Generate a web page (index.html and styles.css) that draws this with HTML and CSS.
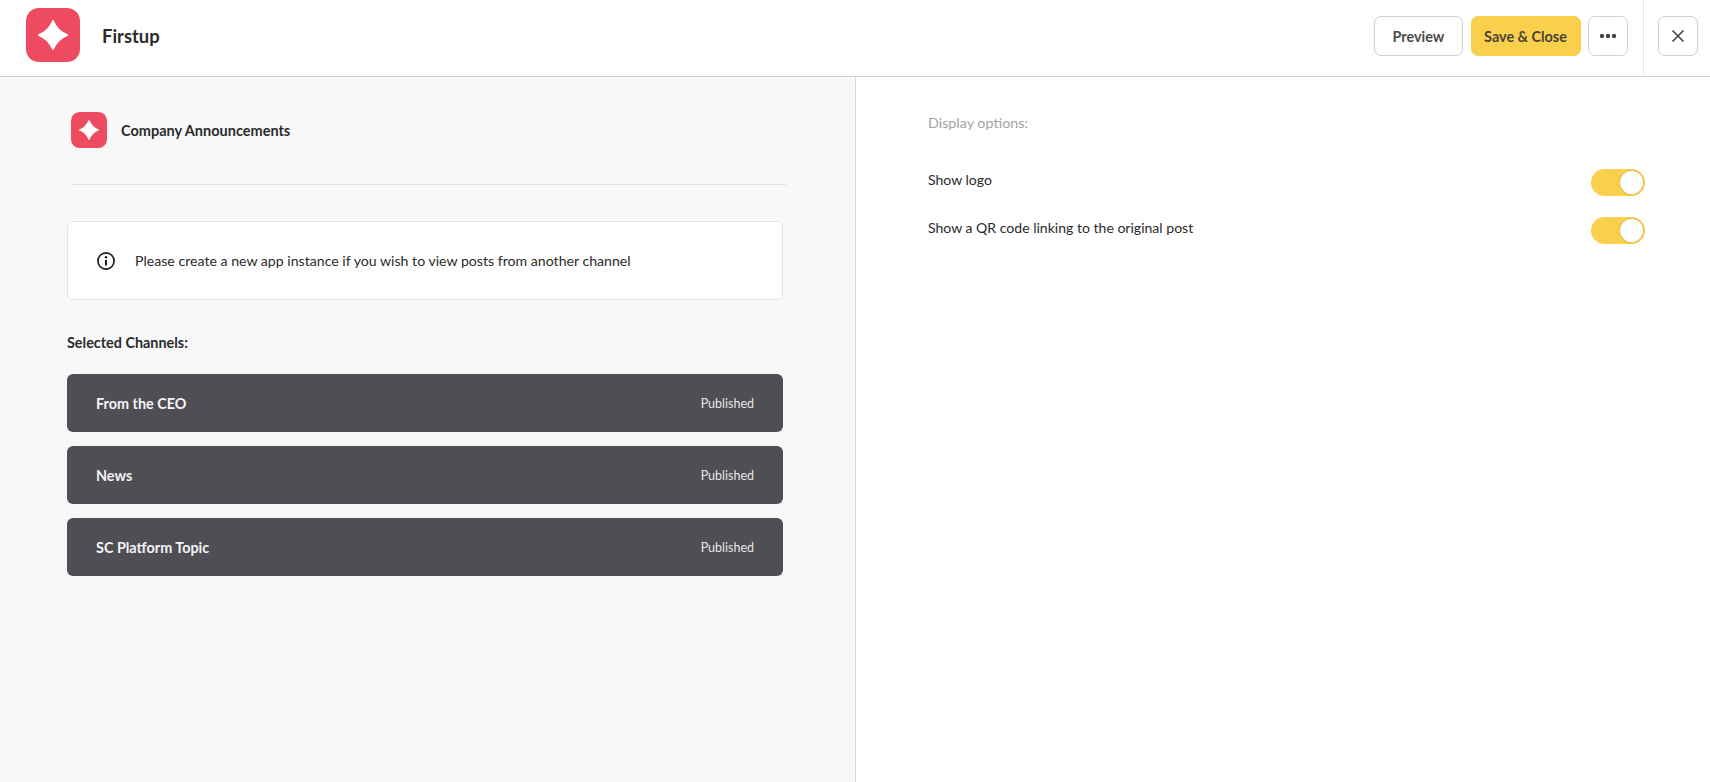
FILE: index.html
```html
<!DOCTYPE html>
<html lang="en">
<head>
    <meta charset="UTF-8">
    <title>Firstup</title>
    <link rel="stylesheet" href="styles.css">
</head>
<body>

<div id="page">
    <div class="topbar">
        <svg class="logo logo-large" viewBox="0 0 54 54">
            <rect width="54" height="54" rx="13" fill="#ef4b60"/>
            <path d="M27 13 C29.8 20 34 24.2 41 27 C34 29.8 29.8 34 27 41 C24.2 34 20 29.8 13 27 C20 24.2 24.2 20 27 13 Z" fill="#fff" stroke="#fff" stroke-width="2" stroke-linejoin="round"/>
        </svg>
        <div class="app-name">Firstup</div>

        <div class="actions">
            <button class="btn btn-preview">Preview</button>
            <button class="btn btn-save">Save &amp; Close</button>
            <button class="btn btn-icon">
                <svg width="18" height="6" viewBox="0 0 18 6"><circle cx="3" cy="3" r="2.2" fill="#444"/><circle cx="9" cy="3" r="2.2" fill="#444"/><circle cx="15" cy="3" r="2.2" fill="#444"/></svg>
            </button>
        </div>
        <div class="close-area">
            <button class="btn btn-icon">
                <svg width="14" height="14" viewBox="0 0 14 14"><path d="M1.5 1.5 L12.5 12.5 M12.5 1.5 L1.5 12.5" stroke="#444" stroke-width="1.6" fill="none"/></svg>
            </button>
        </div>
    </div>

    <div id="contents">
        <div class="left-panel">
            <div class="title-row">
                <svg class="logo logo-small" viewBox="0 0 54 54">
                    <rect width="54" height="54" rx="13" fill="#ef4b60"/>
                    <path d="M27 13 C29.8 20 34 24.2 41 27 C34 29.8 29.8 34 27 41 C24.2 34 20 29.8 13 27 C20 24.2 24.2 20 27 13 Z" fill="#fff" stroke="#fff" stroke-width="2" stroke-linejoin="round"/>
                </svg>
                <div class="title-text">Company Announcements</div>
            </div>

            <div class="notice">
                <svg width="20" height="20" viewBox="0 0 20 20">
                    <circle cx="10" cy="10" r="8.1" stroke="#1c1c1c" stroke-width="1.7" fill="none"/>
                    <circle cx="10" cy="6.2" r="1.2" fill="#1c1c1c"/>
                    <path d="M10 9 V14.6" stroke="#1c1c1c" stroke-width="2"/>
                </svg>
                <span>Please create a new app instance if you wish to view posts from another channel</span>
            </div>

            <div class="section-title">Selected Channels:</div>

            <div class="channels">
                <div class="channel"><span class="channel-name">From the CEO</span><span class="channel-status">Published</span></div>
                <div class="channel"><span class="channel-name">News</span><span class="channel-status">Published</span></div>
                <div class="channel"><span class="channel-name">SC Platform Topic</span><span class="channel-status">Published</span></div>
            </div>
        </div>

        <div class="right-panel">
            <div class="options-title">Display options:</div>
            <div class="option">
                <span>Show logo</span>
                <div class="toggle"><div class="knob"></div></div>
            </div>
            <div class="option">
                <span>Show a QR code linking to the original post</span>
                <div class="toggle"><div class="knob"></div></div>
            </div>
        </div>
    </div>
</div>

</body>
</html>
```

FILE: styles.css
```css
html, body {
    height:  100%;
    margin:  0;
    padding: 0;
}
body {
    font-family: Lato, "Open Sans", sans-serif;
    color: #222;
    background: #fff;
    overflow: hidden;
}
#page {
    display:        flex;
    flex-direction: column;
    height:         782px;
}

.topbar {
    display:       flex;
    align-items:   center;
    height:        77px;
    flex-shrink:   0;
    box-sizing:    border-box;
    padding:       1px 12px 5px 26px;
    border-bottom: 1px solid #cfcfcf;
}
.logo {
    display:     block;
    flex-shrink: 0;
}
.logo-large {
    width:      54px;
    height:     54px;
    margin-top: -2px;
}
.logo-small {
    width:  36px;
    height: 36px;
}
.app-name {
    margin-left: 22px;
    font-size:   18.4px;
    font-weight: 700;
    color:       #2b2b2b;
}
.actions {
    display:     flex;
    gap:         7.5px;
    margin-left: auto;
    padding-right: 15px;
}
.close-area {
    display:     flex;
    align-items: center;
    align-self:  stretch;
    margin:      -1px 0 -5px;
    padding:     1px 0 5px 14px;
    border-left: 1px solid #e8e8e8;
}
.btn {
    display:         flex;
    align-items:     center;
    justify-content: center;
    height:          40px;
    margin:          0;
    padding:         0;
    font-family:     inherit;
    font-size:       14.4px;
    font-weight:     700;
    color:           #4a4a4a;
    background:      #fff;
    border:          1px solid #d0d0d0;
    border-radius:   7px;
}
.btn-preview {
    width: 89px;
}
.btn-save {
    width:        110px;
    background:   #f9d04b;
    border-color: #f9d04b;
    color:        #4a4335;
}
.btn-icon {
    width: 40px;
}

#contents {
    display:   flex;
    flex-grow: 1;
    height:    0;
}
.left-panel {
    width:        856px;
    flex-shrink:  0;
    box-sizing:   border-box;
    padding:      35px 72px 0 67px;
    background:   #f8f8f9;
    border-right: 1px solid #d8d8d8;
}
.title-row {
    display:       flex;
    align-items:   center;
    gap:           14px;
    margin-left:   4px;
    margin-right:  -3px;
    padding-bottom: 36px;
    border-bottom: 1px solid #e2e2e2;
}
.title-text {
    font-size:   14.5px;
    font-weight: 700;
    color:       #2b2b2b;
}
.notice {
    display:       flex;
    align-items:   center;
    gap:           19px;
    height:        79px;
    box-sizing:    border-box;
    margin-top:    36px;
    padding-left:  28px;
    font-size:     14.13px;
    color:         #2b2b2b;
    background:    #fff;
    border:        1px solid #e4e4e4;
    border-radius: 6px;
}
.section-title {
    margin-top:  33px;
    font-size:   14.4px;
    line-height: 20px;
    font-weight: 700;
    color:       #2b2b2b;
}
.channels {
    display:        flex;
    flex-direction: column;
    gap:            14px;
    margin-top:     21px;
}
.channel {
    display:         flex;
    align-items:     center;
    justify-content: space-between;
    height:          58px;
    box-sizing:      border-box;
    padding:         0 29px 0;
    background:      #4f4e54;
    border-radius:   6px;
}
.channel-name {
    font-size:   14.4px;
    font-weight: 700;
    color:       #f4f4f4;
}
.channel-status {
    font-size: 12.5px;
    color:     #e6e6e6;
}

.right-panel {
    flex-grow:  1;
    box-sizing: border-box;
    padding:    36px 65px 0 72px;
}
.options-title {
    font-size:   14.3px;
    line-height: 20px;
    color:       #a3a3a3;
}
.option {
    display:         flex;
    justify-content: space-between;
    height:          48px;
    font-size:       14.06px;
    line-height:     22px;
    color:           #2b2b2b;
}
.options-title + .option {
    margin-top: 36px;
}
.toggle {
    display:         flex;
    align-items:     center;
    justify-content: flex-end;
    width:           54px;
    height:          27px;
    box-sizing:      border-box;
    padding-right:   2px;
    background:      #f9d04b;
    border-radius:   14px;
}
.knob {
    width:         23px;
    height:        23px;
    background:    #fff;
    border-radius: 50%;
    box-shadow:    0 0 2px rgba(0, 0, 0, 0.25);
}
```
